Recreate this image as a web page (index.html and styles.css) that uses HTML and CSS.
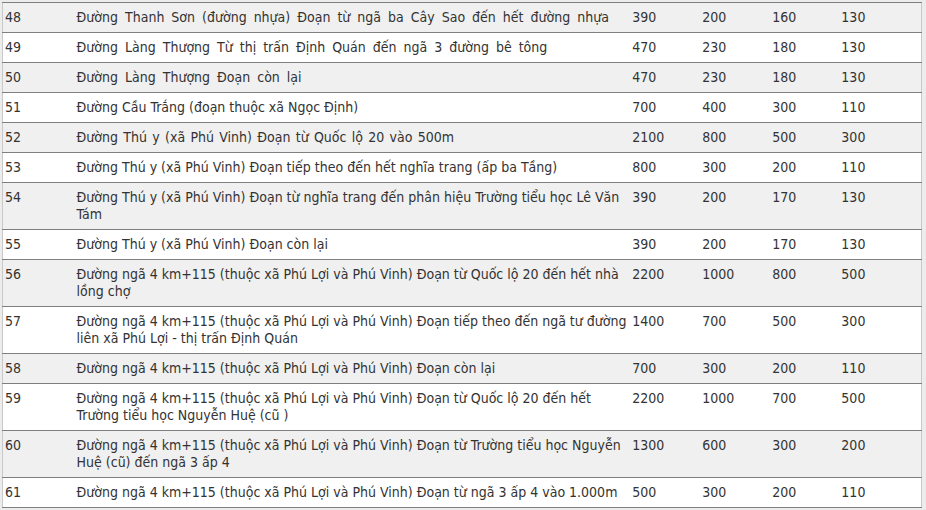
FILE: index.html
```html
<!DOCTYPE html>
<html lang="vi">
<head>
<meta charset="utf-8">
<title>Bảng giá đất</title>
<link rel="stylesheet" href="styles.css">
</head>
<body>
<table class="price-table">
<colgroup>
<col class="c-no"><col class="c-name"><col class="c-v1"><col class="c-v2"><col class="c-v3"><col class="c-v4">
</colgroup>
<tbody>
<tr class="alt"><td class="no">48</td><td class="name wide">Đường Thanh Sơn (đường nhựa) Đoạn từ ngã ba Cây Sao đến hết đường nhựa</td><td>390</td><td>200</td><td>160</td><td>130</td></tr>
<tr><td class="no">49</td><td class="name wide">Đường Làng Thượng Từ thị trấn Định Quán đến ngã 3 đường bê tông</td><td>470</td><td>230</td><td>180</td><td>130</td></tr>
<tr class="alt"><td class="no">50</td><td class="name wide">Đường Làng Thượng Đoạn còn lại</td><td>470</td><td>230</td><td>180</td><td>130</td></tr>
<tr><td class="no">51</td><td class="name">Đường Cầu Trắng (đoạn thuộc xã Ngọc Định)</td><td>700</td><td>400</td><td>300</td><td>110</td></tr>
<tr class="alt"><td class="no">52</td><td class="name mid">Đường Thú y (xã Phú Vinh) Đoạn từ Quốc lộ 20 vào 500m</td><td>2100</td><td>800</td><td>500</td><td>300</td></tr>
<tr><td class="no">53</td><td class="name">Đường Thú y (xã Phú Vinh) Đoạn tiếp theo đến hết nghĩa trang (ấp ba Tầng)</td><td>800</td><td>300</td><td>200</td><td>110</td></tr>
<tr class="alt"><td class="no">54</td><td class="name">Đường Thú y (xã Phú Vinh) Đoạn từ nghĩa trang đến phân hiệu Trường tiểu học Lê Văn<br>Tám</td><td>390</td><td>200</td><td>170</td><td>130</td></tr>
<tr><td class="no">55</td><td class="name">Đường Thú y (xã Phú Vinh) Đoạn còn lại</td><td>390</td><td>200</td><td>170</td><td>130</td></tr>
<tr class="alt"><td class="no">56</td><td class="name">Đường ngã 4 km+115 (thuộc xã Phú Lợi và Phú Vinh) Đoạn từ Quốc lộ 20 đến hết nhà<br>lồng chợ</td><td>2200</td><td>1000</td><td>800</td><td>500</td></tr>
<tr><td class="no">57</td><td class="name">Đường ngã 4 km+115 (thuộc xã Phú Lợi và Phú Vinh) Đoạn tiếp theo đến ngã tư đường<br>liên xã Phú Lợi - thị trấn Định Quán</td><td>1400</td><td>700</td><td>500</td><td>300</td></tr>
<tr class="alt"><td class="no">58</td><td class="name">Đường ngã 4 km+115 (thuộc xã Phú Lợi và Phú Vinh) Đoạn còn lại</td><td>700</td><td>300</td><td>200</td><td>110</td></tr>
<tr><td class="no">59</td><td class="name">Đường ngã 4 km+115 (thuộc xã Phú Lợi và Phú Vinh) Đoạn từ Quốc lộ 20 đến hết<br>Trường tiểu học Nguyễn Huệ (cũ )</td><td>2200</td><td>1000</td><td>700</td><td>500</td></tr>
<tr class="alt"><td class="no">60</td><td class="name">Đường ngã 4 km+115 (thuộc xã Phú Lợi và Phú Vinh) Đoạn từ Trường tiểu học Nguyễn<br>Huệ (cũ) đến ngã 3 ấp 4</td><td>1300</td><td>600</td><td>300</td><td>200</td></tr>
<tr><td class="no">61</td><td class="name">Đường ngã 4 km+115 (thuộc xã Phú Lợi và Phú Vinh) Đoạn từ ngã 3 ấp 4 vào 1.000m</td><td>500</td><td>300</td><td>200</td><td>110</td></tr>
</tbody>
</table>
</body>
</html>
```

FILE: styles.css
```css
html, body {
  margin: 0;
  padding: 0;
  background: #ececec;
}

body {
  padding-top: 2px;
  padding-left: 2px;
  font-family: "DejaVu Sans Condensed", "DejaVu Sans", sans-serif;
  font-stretch: semi-condensed;
  font-size: 14px;
  color: #333333;
}

.price-table {
  width: 920px;
  table-layout: fixed;
  border-collapse: collapse;
  border-left: 1px solid #c9c9c9;
  border-right: 1px solid #c9c9c9;
  border-bottom: 1px solid #7f7f7f;
  background: #ffffff;
}

.c-no { width: 73px; }
.c-name { width: 555px; }
.c-v1 { width: 70px; }
.c-v2 { width: 70px; }
.c-v3 { width: 69px; }
.c-v4 { width: 81px; }

.price-table td {
  vertical-align: top;
  line-height: 17px;
  padding: 6px 0 6px 1px;
  border-top: 1px solid #7f7f7f;
  text-align: left;
  white-space: nowrap;
}

.price-table td.no {
  padding-left: 2px;
}

.price-table td.name {
  padding-right: 2px;
}

.price-table td.wide {
  word-spacing: 3px;
}

.price-table td.mid {
  word-spacing: 1.3px;
}

.price-table tr.alt td {
  background: #f0f0f0;
}
```
